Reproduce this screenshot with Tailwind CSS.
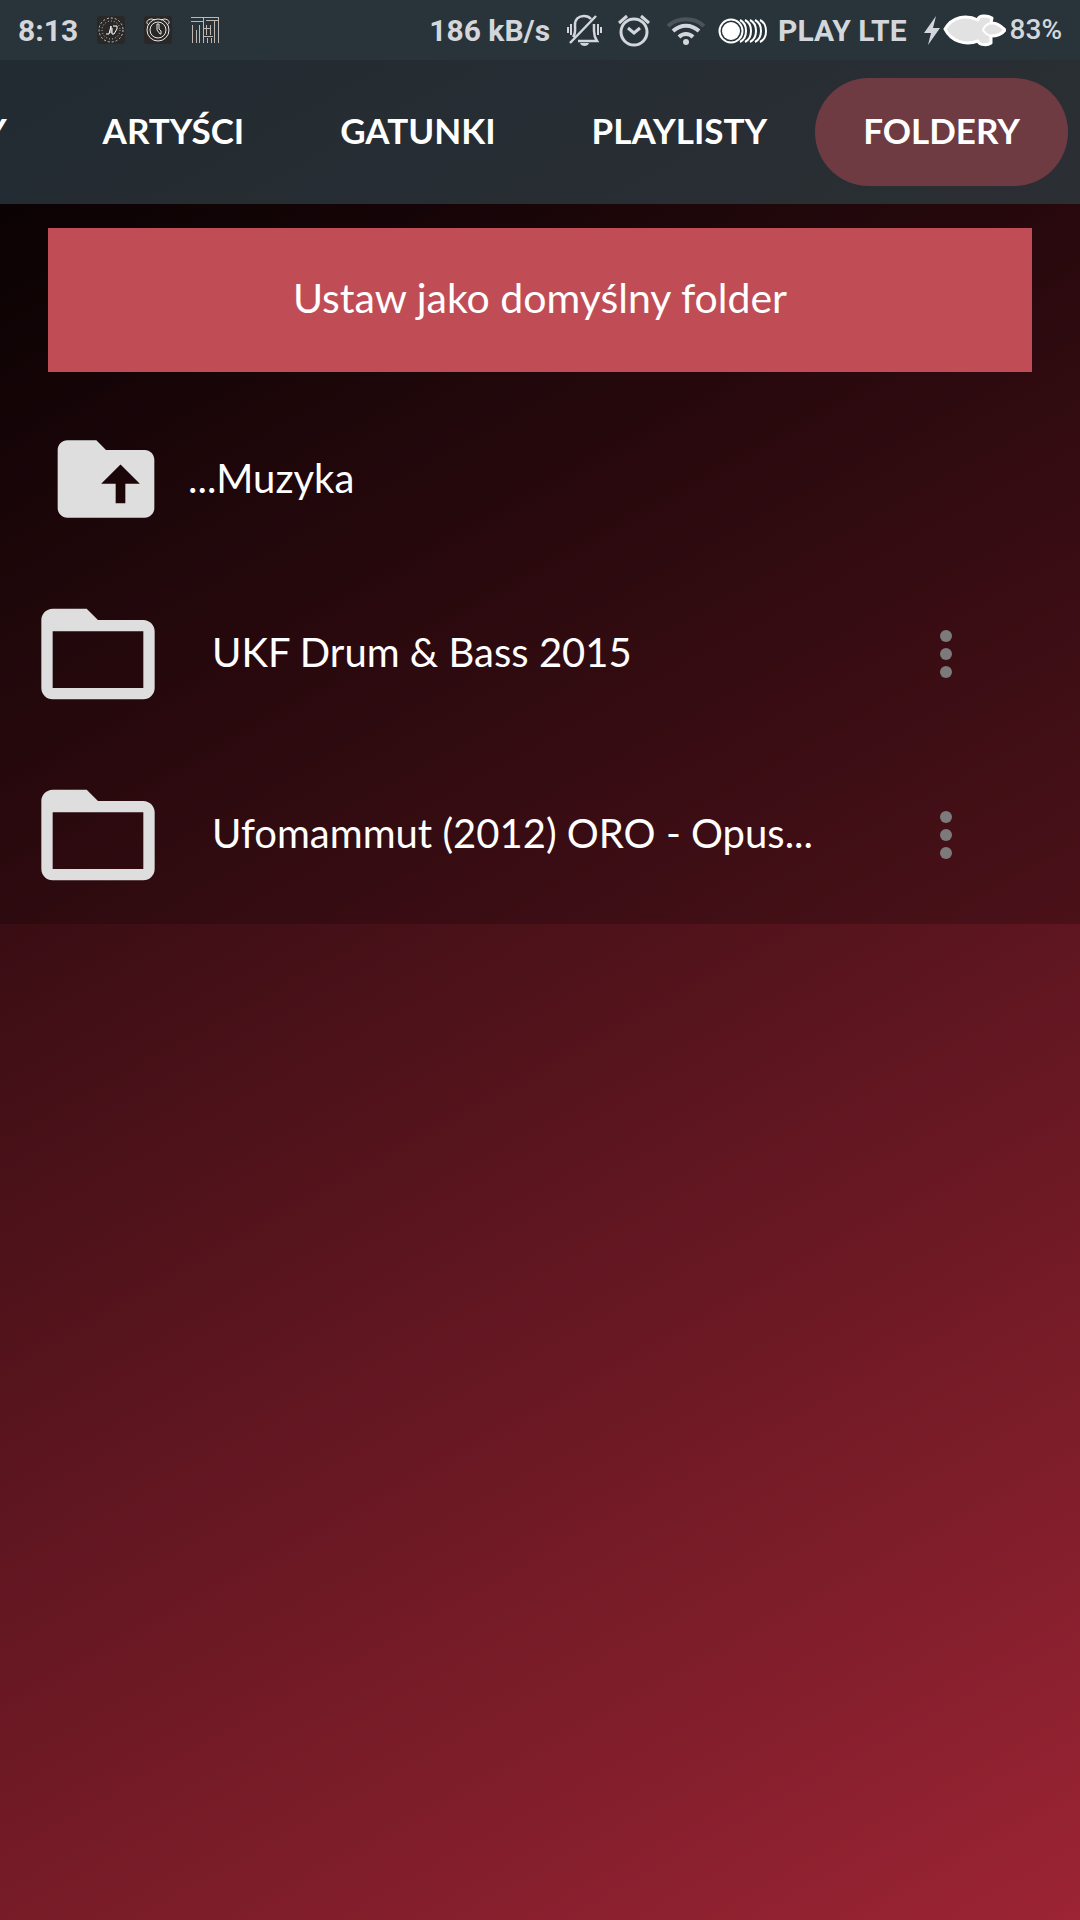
<!DOCTYPE html>
<html lang="pl">
<head>
<meta charset="utf-8">
<meta name="viewport" content="width=device-width, initial-scale=1">
<title>Foldery</title>
<script src="https://cdn.jsdelivr.net/npm/@tailwindcss/browser@4"></script>
</head>
<body class="min-h-screen overflow-x-hidden bg-[linear-gradient(151deg,#000000,#9c2434)] font-['Lato',sans-serif] text-white">
<header>
  <div class="flex h-15 items-center justify-between bg-[#28343a] pr-[18px] pl-[18px] font-['Roboto',sans-serif] text-[30px] font-bold text-[#d3d7dc]">
    <div class="flex items-center gap-[19px]">
      <span>8:13</span>
      <svg class="size-7" viewBox="0 0 28 28" fill="none" stroke="#c9c9c9"><rect width="28" height="28" rx="3" fill="#2a2827" stroke="none"/><circle cx="14" cy="14" r="12" stroke-dasharray="2 2"/><circle cx="14" cy="14" r="9" stroke-dasharray="1 2"/><path d="M9 18h3l2-8v7M16 10h4v3l-3 5h-2v-6" stroke="#fff"/></svg>
      <svg class="size-7" viewBox="0 0 28 28" fill="none" stroke="#e8e8e8"><rect width="28" height="28" rx="3" fill="#2a2827" stroke="none"/><circle cx="14" cy="14" r="11"/><circle cx="14" cy="14" r="8"/><path d="M5 9C1 7 3 3 8 3l3 1M23 9c4-2 2-6-3-6l-3 1M13 8v6l3 4h1v-3l-2-2V8z"/></svg>
      <svg class="size-7" viewBox="0 0 28 28" fill="none" stroke="#c0b8b0"><path d="M0 1.500h28M0 5.500h12M15 4.500h12M1.500 9v18M5.500 14v13M8.500 9v18M12.500 1v26M15.500 9v10M19.500 9v10M23.500 5v22M27.500 1v26M13 12.500h7M13 20.500h9M16.500 22v5M20.500 22v5"/></svg>
    </div>
    <div class="flex items-center">
      <span class="mr-4">186 kB/s</span>
      <svg class="mr-4 h-9 w-9" viewBox="0 0 36 36" fill="none" stroke="#d3d7dc" stroke-width="2.500"><path d="M7 25c3-4 2-7 2-12 0-6 4-9 9-9 3 0 5 .5 7 3M28 12v7c0 4 1 7 3 10H12M4 31 30 4"/><path d="M2 15v6M5 12v11M32 12v11M35 15v6" stroke-width="2"/><path d="M14 31h9c-1 4-8 4-9 0z" fill="#d3d7dc" stroke="none"/></svg>
      <svg class="mr-4 h-9 w-8" viewBox="0 0 32 36" fill="none" stroke="#d3d7dc" stroke-width="3"><circle cx="16" cy="20" r="13"/><path d="M1 11l8-7M31 11l-8-7M10 16l6 5 6-5"/></svg>
      <svg class="mr-3 h-9 w-10" viewBox="0 0 40 36" fill="none" stroke="#d3d7dc" stroke-width="4"><path d="M2 14c10-9 26-9 36 0" stroke="#4b5459"/><path d="M7 19c8-7 18-7 26 0M13 25c4-4 10-4 14 0"/><circle cx="20" cy="30" r="3" fill="#d3d7dc" stroke="none"/></svg>
      <svg class="mr-2.5 h-7 w-[50px]" viewBox="0 0 50 28" fill="none" stroke="#fff" stroke-width="2"><circle cx="13" cy="15" r="11.500"/><circle cx="13" cy="15" r="9" fill="#fff" stroke="none"/><path d="M22 4c8 4 8 18 0 22M27 4c8 4 8 18 0 22M32 4c8 4 8 18 0 22M37 4c8 4 8 18 0 22M42 4c8 4 8 18 0 22"/></svg>
      <span class="mr-4">PLAY LTE</span>
      <svg class="mr-1 h-9 w-[83px]" viewBox="0 0 83 36"><path d="M13 4 1 21h7L5 33l12-17h-7z" fill="#d3d7dc"/><path d="M22 17C29 5 43 2 55 8c0-5 9-5 14-2l-1 5c7-1 11 4 14 7-3 4-8 6-14 6v7c-4 3-12 2-13-2-13 5-27 0-33-12z" fill="#e2e2e2" stroke="#fff" stroke-width="3" stroke-linejoin="round"/><path d="M68 11c-4 1-7 4-8 7 2 3 4 5 8 6" fill="none" stroke="#fff" stroke-width="2"/></svg>
      <span class="text-[28px] font-medium">83%</span>
    </div>
  </div>
  <nav class="flex h-36 items-center justify-end bg-[linear-gradient(151deg,#222b32,#2b2f34)] pr-3 text-[35px] font-bold">
    <a href="#albumy" class="shrink-0 px-12 pb-1">ALBUMY</a>
    <a href="#artysci" class="shrink-0 px-12 pb-1">ARTYŚCI</a>
    <a href="#gatunki" class="shrink-0 px-12 pb-1">GATUNKI</a>
    <a href="#playlisty" class="shrink-0 px-12 pb-1">PLAYLISTY</a>
    <a href="#foldery" aria-current="page" class="flex h-27 shrink-0 items-center rounded-full bg-[#6f3b43] px-12 pb-1">FOLDERY</a>
  </nav>
</header>
<main class="bg-black/20 pt-6 text-[40px]">
  <div class="px-12"><button class="h-36 w-full bg-[#c04d55] pb-1 text-[41px]">Ustaw jako domyślny folder</button></div>
  <ul>
    <li class="flex h-[190px] items-center pt-6 pl-12">
      <a href="#muzyka" class="flex items-center gap-6">
        <svg class="size-[116px]" viewBox="0 0 24 24" fill="#dedede"><path d="M20 6h-8l-2-2H4c-1.100 0-2 .9-2 2v12c0 1.100.9 2 2 2h16c1.100 0 2-.9 2-2V8c0-1.100-.9-2-2-2zm-4 7v4h-2v-4h-3l4-4 4 4z"/></svg>
        <span class="pb-0.5">...Muzyka</span>
      </a>
    </li>
    <li class="flex h-[181px] items-center pt-0.5 pr-[98px] pl-[30px]">
      <a href="#ukf" class="flex min-w-0 flex-1 items-center gap-[46px]">
        <svg class="size-[136px] shrink-0" viewBox="0 0 24 24" fill="#dedede"><path d="M20 6h-8l-2-2H4c-1.100 0-2 .9-2 2v12c0 1.100.9 2 2 2h16c1.100 0 2-.9 2-2V8c0-1.100-.9-2-2-2zm0 12H4V8h16z"/></svg>
        <span class="truncate pb-1">UKF Drum &amp; Bass 2015</span>
      </a>
      <button class="shrink-0" aria-label="Opcje"><svg class="size-18" viewBox="0 0 24 24" fill="#7c7a7a"><circle cx="12" cy="6" r="2"/><circle cx="12" cy="12" r="2"/><circle cx="12" cy="18" r="2"/></svg></button>
    </li>
    <li class="flex h-[181px] items-center pt-0.5 pr-[98px] pl-[30px]">
      <a href="#ufomammut" class="flex min-w-0 flex-1 items-center gap-[46px]">
        <svg class="size-[136px] shrink-0" viewBox="0 0 24 24" fill="#dedede"><path d="M20 6h-8l-2-2H4c-1.100 0-2 .9-2 2v12c0 1.100.9 2 2 2h16c1.100 0 2-.9 2-2V8c0-1.100-.9-2-2-2zm0 12H4V8h16z"/></svg>
        <span class="truncate pb-1">Ufomammut (2012) ORO - Opus...</span>
      </a>
      <button class="shrink-0" aria-label="Opcje"><svg class="size-18" viewBox="0 0 24 24" fill="#7c7a7a"><circle cx="12" cy="6" r="2"/><circle cx="12" cy="12" r="2"/><circle cx="12" cy="18" r="2"/></svg></button>
    </li>
  </ul>
</main>
</body>
</html>
